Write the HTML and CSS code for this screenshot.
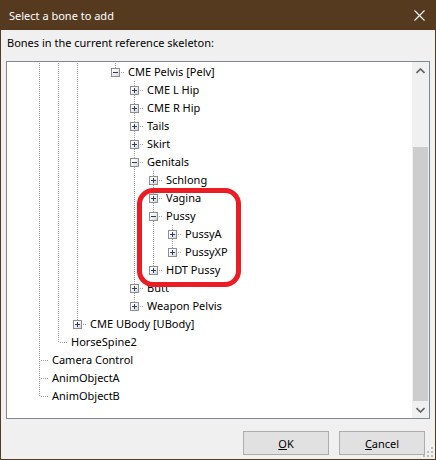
FILE: index.html
```html
<!DOCTYPE html>
<html lang="en">
<head>
  <meta charset="UTF-8">
  <title>Select a bone to add</title>
  <link rel="stylesheet" href="styles.css">
</head>
<body>
  <div class="window">
    <!-- Title bar -->
    <div class="titlebar">
      <span class="title">Select a bone to add</span>
      <svg class="close" width="11" height="11" viewBox="0 0 11 11">
        <path d="M0.5 0.5 L10.5 10.5 M10.5 0.5 L0.5 10.5" stroke="#fff" stroke-width="1.1" fill="none"/>
      </svg>
    </div>

    <div class="content">
      <div class="caption">Bones in the current reference skeleton:</div>

      <!-- Bone tree with its scrollbar -->
      <div class="tree">
        <div class="tree-list" id="tree-list"></div>
        <div class="scrollbar">
          <div class="arrow">
            <svg width="9" height="6" viewBox="0 0 9 6"><path d="M0.5 5 L4.5 1 L8.5 5" stroke="#606060" stroke-width="1.6" fill="none"/></svg>
          </div>
          <div class="track"><div class="thumb"></div></div>
          <div class="arrow">
            <svg width="9" height="6" viewBox="0 0 9 6"><path d="M0.5 1 L4.5 5 L8.5 1" stroke="#606060" stroke-width="1.6" fill="none"/></svg>
          </div>
        </div>
      </div>

      <div class="buttons">
        <button><u>O</u>K</button>
        <button><u>C</u>ancel</button>
      </div>
    </div>

    <!-- Red marker drawn around the pussy bones -->
    <div class="marker"></div>

    <svg class="grip" width="10" height="10" viewBox="0 0 10 10">
      <rect x="8" y="0" width="2" height="2" fill="#bcbcbc"/>
      <rect x="4" y="4" width="2" height="2" fill="#bcbcbc"/>
      <rect x="8" y="4" width="2" height="2" fill="#bcbcbc"/>
      <rect x="0" y="8" width="2" height="2" fill="#bcbcbc"/>
      <rect x="4" y="8" width="2" height="2" fill="#bcbcbc"/>
      <rect x="8" y="8" width="2" height="2" fill="#bcbcbc"/>
    </svg>
  </div>

  <script>
    // Visible part of the skeleton: [depth, expander, name]
    const bones = [
      [4, "minus", "CME Pelvis [Pelv]"],
      [5, "plus", "CME L Hip"],
      [5, "plus", "CME R Hip"],
      [5, "plus", "Tails"],
      [5, "plus", "Skirt"],
      [5, "minus", "Genitals"],
      [6, "plus", "Schlong"],
      [6, "plus", "Vagina"],
      [6, "minus", "Pussy"],
      [7, "plus", "PussyA"],
      [7, "plus", "PussyXP"],
      [6, "plus", "HDT Pussy"],
      [5, "plus", "Butt"],
      [5, "plus", "Weapon Pelvis"],
      [2, "plus", "CME UBody [UBody]"],
      [1, "leaf", "HorseSpine2"],
      [0, "leaf", "Camera Control"],
      [0, "leaf", "AnimObjectA"],
      [0, "leaf", "AnimObjectB"]
    ];

    // Does a sibling at this level come later in the list?
    function continues(index, level) {
      for (let j = index + 1; j < bones.length; j++) {
        if (bones[j][0] < level) return false;
        if (bones[j][0] === level) return true;
      }
      return false;
    }

    const list = document.getElementById("tree-list");

    bones.forEach(function (bone, i) {
      const depth = bone[0];
      const row = document.createElement("div");
      row.className = "row";

      for (let k = 0; k < depth; k++) {
        const cell = document.createElement("span");
        cell.className = continues(i, k) ? "cell pipe" : "cell";
        row.appendChild(cell);
      }

      const node = document.createElement("span");
      node.className = continues(i, depth) ? "cell node more" : "cell node";
      if (bone[1] !== "leaf") {
        const box = document.createElement("span");
        box.className = "expander " + bone[1];
        node.appendChild(box);
      }
      row.appendChild(node);

      const label = document.createElement("span");
      label.className = "label";
      label.textContent = bone[2];
      row.appendChild(label);

      list.appendChild(row);
    });
  </script>
</body>
</html>
```

FILE: styles.css
```css
/* General styling */
body {
  margin: 0;
  font-family: "Noto Sans", "Open Sans", sans-serif;
  font-size: 11px;
  color: #000;
  background-color: #f0f0f0;
}

.window {
  position: relative;
  width: 436px;
  height: 460px;
  box-sizing: border-box;
  border: 1px solid #553a1f;
  border-top: 0;
  background-color: #f0f0f0;
  display: flex;
  flex-direction: column;
}

/* Title bar */
.titlebar {
  height: 30px;
  flex: none;
  background-color: #553a1f;
  color: #fff;
  display: flex;
  align-items: center;
  justify-content: space-between;
  padding: 0 10px 0 8px;
}

.content {
  flex: 1;
  display: flex;
  flex-direction: column;
  padding: 5px 5px 0;
}

.caption {
  padding-left: 1px;
  line-height: 16px;
  margin-bottom: 10px;
}

/* Tree view */
.tree {
  height: 358px;
  box-sizing: border-box;
  border: 1px solid #828790;
  background-color: #fff;
  display: flex;
}

.tree-list {
  flex: 1;
  padding: 1px 0 0 23px;
  overflow: hidden;
}

.row {
  display: flex;
  height: 18px;
  line-height: 18px;
  white-space: nowrap;
}

.cell {
  width: 19px;
  height: 18px;
  flex: none;
  display: flex;
  align-items: flex-start;
  background-repeat: no-repeat;
}

/* dotted guide lines */
.cell.pipe {
  background-image: repeating-linear-gradient(#a0a0a0 0 1px, transparent 1px 2px);
  background-position: 9px 0;
  background-size: 1px 18px;
}

.cell.node {
  background-image:
    repeating-linear-gradient(#a0a0a0 0 1px, transparent 1px 2px),
    repeating-linear-gradient(to right, #a0a0a0 0 1px, transparent 1px 2px);
  background-position: 9px 0, 11px 9px;
  background-size: 1px 10px, 10px 1px;
}

.cell.node.more {
  background-size: 1px 18px, 10px 1px;
}

.expander {
  position: relative;
  width: 9px;
  height: 9px;
  box-sizing: border-box;
  margin: 5px 0 0 5px;
  border: 1px solid #8e8f8f;
  background: linear-gradient(135deg, #ffffff 20%, #d6d6d6);
}

.expander::before,
.expander::after {
  content: "";
  position: absolute;
  background-color: #2b3c63;
}

.expander::before {
  left: 1px;
  top: 3px;
  width: 5px;
  height: 1px;
}

.expander.plus::after {
  left: 3px;
  top: 1px;
  width: 1px;
  height: 5px;
}

.label {
  padding-left: 3px;
}

/* Scrollbar */
.scrollbar {
  width: 17px;
  flex: none;
  background-color: #f0f0f0;
  display: flex;
  flex-direction: column;
}

.arrow {
  height: 17px;
  flex: none;
  display: flex;
  align-items: center;
  justify-content: center;
}

.track {
  flex: 1;
  display: flex;
  flex-direction: column;
  padding-top: 68px;
}

.thumb {
  flex: 1;
  margin: 0 1px;
  background-color: #cdcdcd;
}

/* Dialog buttons */
.buttons {
  display: flex;
  justify-content: flex-end;
  gap: 10px;
  margin-top: 12px;
  padding-right: 5px;
}

button {
  width: 86px;
  height: 24px;
  padding: 0;
  font-family: inherit;
  font-size: 11px;
  color: #000;
  background-color: #e1e1e1;
  border: 1px solid #adadad;
}

/* Annotation around the selected bones */
.marker {
  position: absolute;
  left: 136px;
  top: 188px;
  width: 104px;
  height: 99px;
  box-sizing: border-box;
  border: 5px solid #ec1c24;
  border-radius: 16px;
}

.grip {
  position: absolute;
  right: 2px;
  bottom: 2px;
}
```
